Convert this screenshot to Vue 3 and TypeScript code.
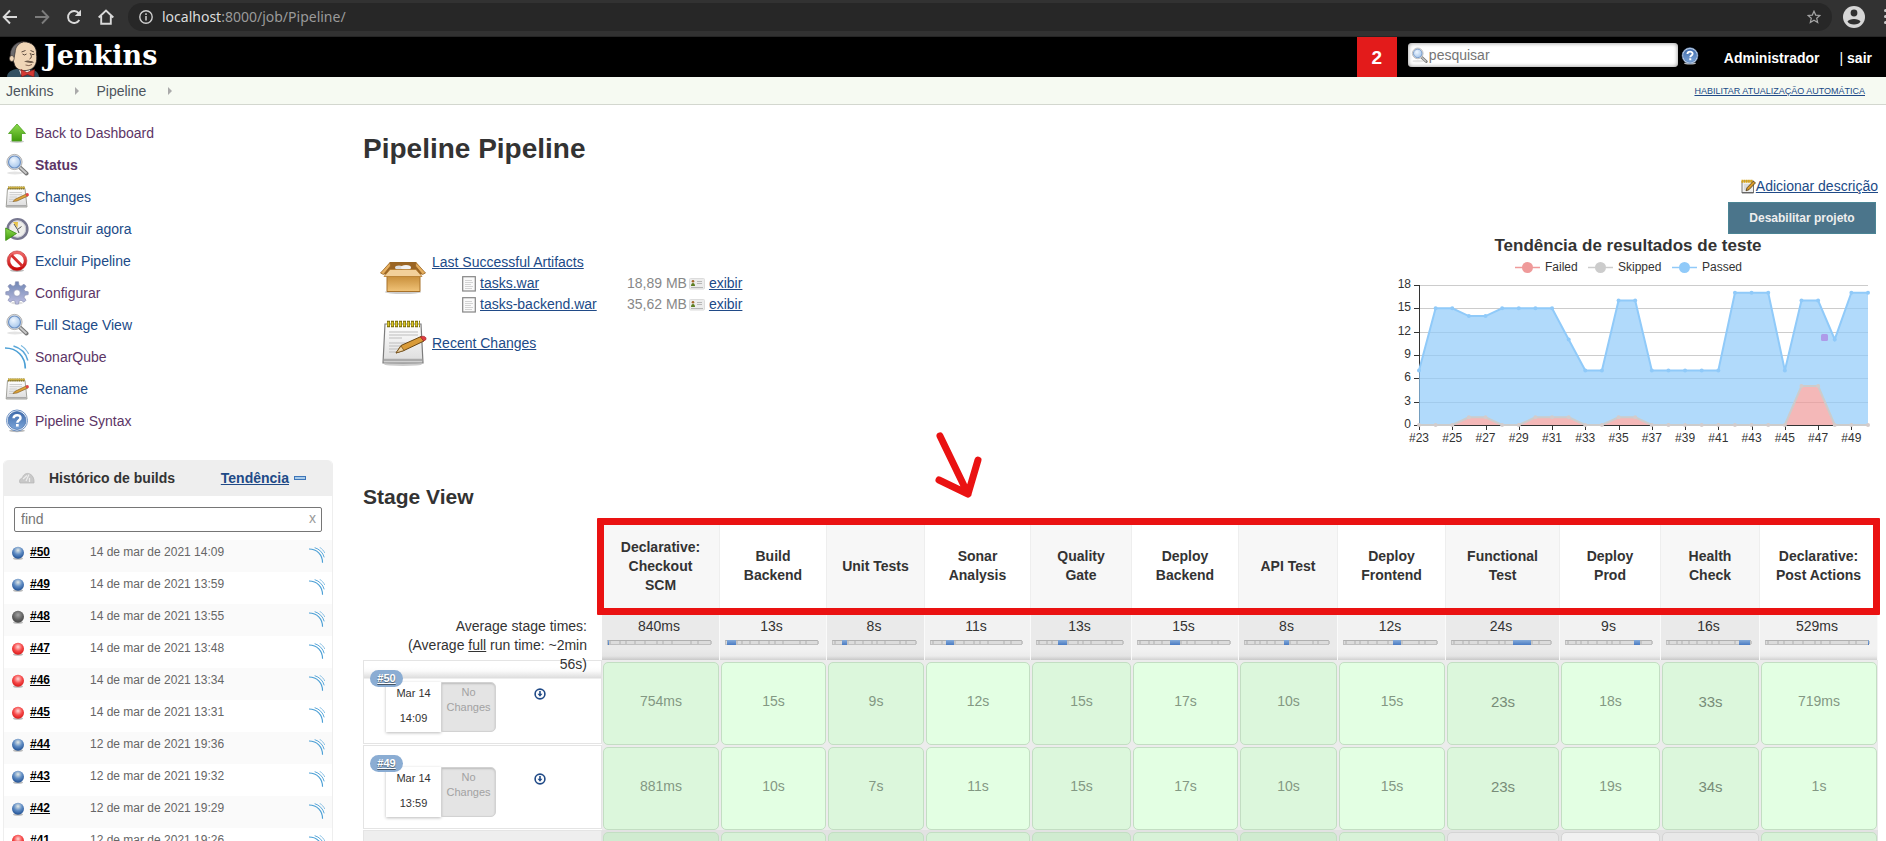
<script setup lang="ts">
import { ref } from 'vue'

interface Task { label: string; icon: string; visited?: boolean; active?: boolean }
interface Build { id: number; ball: 'blue' | 'red' | 'grey'; date: string }
interface Stage { name: string; avg: string; seconds: number; width: number; times: string[]; skipped?: boolean; strong?: boolean }

const tasks: Task[] = [
  { label: 'Back to Dashboard', icon: 'up', visited: true },
  { label: 'Status', icon: 'search', visited: true, active: true },
  { label: 'Changes', icon: 'notepad' },
  { label: 'Construir agora', icon: 'clock' },
  { label: 'Excluir Pipeline', icon: 'forbid' },
  { label: 'Configurar', icon: 'gear', visited: true },
  { label: 'Full Stage View', icon: 'search' },
  { label: 'SonarQube', icon: 'sonar', visited: true },
  { label: 'Rename', icon: 'notepad' },
  { label: 'Pipeline Syntax', icon: 'help', visited: true },
]

const builds: Build[] = [
  { id: 50, ball: 'blue', date: '14 de mar de 2021 14:09' },
  { id: 49, ball: 'blue', date: '14 de mar de 2021 13:59' },
  { id: 48, ball: 'grey', date: '14 de mar de 2021 13:55' },
  { id: 47, ball: 'red', date: '14 de mar de 2021 13:48' },
  { id: 46, ball: 'red', date: '14 de mar de 2021 13:34' },
  { id: 45, ball: 'red', date: '14 de mar de 2021 13:31' },
  { id: 44, ball: 'blue', date: '12 de mar de 2021 19:36' },
  { id: 43, ball: 'blue', date: '12 de mar de 2021 19:32' },
  { id: 42, ball: 'blue', date: '12 de mar de 2021 19:29' },
  { id: 41, ball: 'red', date: '12 de mar de 2021 19:26' },
]

const artifacts = [
  { name: 'tasks.war', size: '18,89 MB' },
  { name: 'tasks-backend.war', size: '35,62 MB' },
]

const stages: Stage[] = [
  { name: 'Declarative: Checkout SCM', avg: '840ms', seconds: 0.84, width: 118, times: ['754ms', '881ms'] },
  { name: 'Build Backend', avg: '13s', seconds: 13, width: 107, times: ['15s', '10s'] },
  { name: 'Unit Tests', avg: '8s', seconds: 8, width: 98, times: ['9s', '7s'] },
  { name: 'Sonar Analysis', avg: '11s', seconds: 11, width: 106, times: ['12s', '11s'] },
  { name: 'Quality Gate', avg: '13s', seconds: 13, width: 101, times: ['15s', '15s'] },
  { name: 'Deploy Backend', avg: '15s', seconds: 15, width: 107, times: ['17s', '17s'] },
  { name: 'API Test', avg: '8s', seconds: 8, width: 99, times: ['10s', '10s'] },
  { name: 'Deploy Frontend', avg: '12s', seconds: 12, width: 108, times: ['15s', '15s'] },
  { name: 'Functional Test', avg: '24s', seconds: 24, width: 114, times: ['23s', '23s'], skipped: true, strong: true },
  { name: 'Deploy Prod', avg: '9s', seconds: 9, width: 101, times: ['18s', '19s'], skipped: true },
  { name: 'Health Check', avg: '16s', seconds: 16, width: 99, times: ['33s', '34s'], skipped: true, strong: true },
  { name: 'Declarative: Post Actions', avg: '529ms', seconds: 0.53, width: 118, times: ['719ms', '1s'] },
]

const runs = [
  { id: 50, day: 'Mar 14', time: '14:09' },
  { id: 49, day: 'Mar 14', time: '13:59' },
]

// Share of the whole run taken by each stage, in percent
const total = stages.reduce((sum, s) => sum + s.seconds, 0)
let elapsed = 0
const segments = stages.map((s) => {
  const start = (elapsed / total) * 100
  elapsed += s.seconds
  return { start, size: (s.seconds / total) * 100 }
})

// Test trend chart
const passed = [7, 15, 15, 14, 14, 15, 15, 15, 15, 11, 7, 7, 16, 16, 7, 7, 7, 7, 7, 17, 17, 17, 7, 16, 16, 11, 17, 17]
const failed = [0, 0, 0, 1, 1, 0, 0, 1, 1, 1, 0, 0, 1, 1, 0, 0, 0, 0, 0, 0, 0, 0, 0, 5, 5, 0, 0, 0]
const left = 41
const right = 490
const base = 191
const px = (i: number) => left + (i * (right - left)) / (passed.length - 1)
const py = (v: number) => base - v * 7.78
const line = (values: number[]) => values.map((v, i) => `${px(i)},${py(v)}`).join(' ')
const passedLine = line(passed)
const failedLine = line(failed)
const passedArea = passedLine + ' ' + failed.map((v, i) => `${px(i)},${py(v)}`).reverse().join(' ')
const failedArea = `${failedLine} ${right},${base} ${left},${base}`
const yTicks = [0, 3, 6, 9, 12, 15, 18]
const xTicks = passed.map((_, i) => i).filter((i) => i % 2 === 0)

const query = ref('')
const find = ref('')
</script>

<template>
  <svg class="sprite" aria-hidden="true">
    <defs>
      <linearGradient id="gGreen" x1="0" y1="0" x2="0" y2="1"><stop offset="0" stop-color="#8fdc50" /><stop offset="1" stop-color="#3f9a0c" /></linearGradient>
      <radialGradient id="gLens" cx=".4" cy=".35" r=".7"><stop offset="0" stop-color="#eef6ff" /><stop offset="1" stop-color="#a3c4ea" /></radialGradient>
      <linearGradient id="gHelp" x1="0" y1="0" x2="0" y2="1"><stop offset="0" stop-color="#3f6bab" /><stop offset="1" stop-color="#7ba4d8" /></linearGradient>
      <linearGradient id="gRed" x1="0" y1="0" x2="0" y2="1"><stop offset="0" stop-color="#ef6b6b" /><stop offset="1" stop-color="#c80808" /></linearGradient>
      <linearGradient id="gGear" x1="0" y1="0" x2="0" y2="1"><stop offset="0" stop-color="#6f86b4" /><stop offset="1" stop-color="#bdbde0" /></linearGradient>
      <linearGradient id="gPaper" x1="0" y1="0" x2="0" y2="1"><stop offset="0" stop-color="#ffffff" /><stop offset="1" stop-color="#dcdcdc" /></linearGradient>
      <linearGradient id="gBox" x1="0" y1="0" x2="0" y2="1"><stop offset="0" stop-color="#c58a35" /><stop offset="1" stop-color="#f0c378" /></linearGradient>
      <radialGradient id="bBlue" cx=".5" cy=".3" r=".7"><stop offset="0" stop-color="#e3e9e6" /><stop offset=".5" stop-color="#5f8cc4" /><stop offset="1" stop-color="#1f4f92" /></radialGradient>
      <radialGradient id="bRed" cx=".5" cy=".35" r=".7"><stop offset="0" stop-color="#ffd9d9" /><stop offset=".5" stop-color="#f64a4a" /><stop offset="1" stop-color="#d41111" /></radialGradient>
      <radialGradient id="bGrey" cx=".5" cy=".35" r=".7"><stop offset="0" stop-color="#a4a4a4" /><stop offset=".6" stop-color="#5e5e5e" /><stop offset="1" stop-color="#444" /></radialGradient>
    </defs>
    <symbol id="i-up" viewBox="0 0 24 24">
      <ellipse cx="12" cy="20.500" rx="7" ry="1.500" fill="#ccc" />
      <path d="M12 3 20.500 12.500H16.500V20H7V12.500H3.500Z" fill="url(#gGreen)" stroke="#4aa01c" stroke-width=".8" stroke-linejoin="round" />
    </symbol>
    <symbol id="i-search" viewBox="0 0 24 24">
      <ellipse cx="10" cy="20" rx="8" ry="1.500" fill="#e4e4e4" />
      <path d="M15 14.500 21.500 20.500" stroke="#777" stroke-width="4" stroke-linecap="round" />
      <path d="M15.500 15 21 20" stroke="#c9c9c9" stroke-width="1.800" stroke-linecap="round" />
      <circle cx="9.500" cy="9" r="7.600" fill="#e6e6e6" stroke="#a0a0a0" stroke-width=".8" />
      <circle cx="9.500" cy="9" r="6" fill="url(#gLens)" stroke="#6e93c6" stroke-width="1.200" />
    </symbol>
    <symbol id="i-notepad" viewBox="0 0 24 24">
      <path d="M2.500 3.500H20L22 22H1.200Z" fill="url(#gPaper)" stroke="#9a9a93" stroke-width=".9" />
      <path d="M1.500 20.700H21.500" stroke="#aaa" stroke-width="1.400" />
      <path d="M3 3H20" stroke="#7c6a14" stroke-width="3" stroke-dasharray="1.500 .6" />
      <path d="M3 2.500H20" stroke="#cdb044" stroke-width="1.500" />
      <path d="M4.500 7.500H17M4.500 9.700H17M4.500 12H12M4 14.300H10M4 16.500H9" stroke="#c4c4c4" stroke-width=".8" />
      <path d="M8 16.500 10 14.300 21.500 8.800 23 11 12 16Z" fill="#dfa43a" stroke="#76541c" stroke-width=".6" />
      <circle cx="22.300" cy="9.700" r="1.600" fill="#e04848" />
    </symbol>
    <symbol id="i-edit" viewBox="0 0 15 15">
      <path d="M1 2H12.500V14H1Z" fill="#f0f0f0" stroke="#777" />
      <path d="M1 13.500H12.500" stroke="#666" />
      <path d="M.5 2.200H12" stroke="#d8a417" stroke-width="3" stroke-dasharray="1.700 .5" />
      <path d="M3 6H10M3 8H8M3 10H6" stroke="#bbb" stroke-width=".8" />
      <path d="M5 11.800 6 8.800 12.300 2.200 14.500 3.800 8 10.700Z" fill="#d99a2c" stroke="#4f3a14" stroke-width=".8" />
    </symbol>
    <symbol id="i-clock" viewBox="0 0 24 24">
      <circle cx="12.500" cy="12" r="9.800" fill="#efefeb" stroke="#77778f" stroke-width="2.600" />
      <circle cx="12.500" cy="12" r="8.200" fill="none" stroke="#c8c8d2" stroke-width="1" />
      <path d="M8 5 13 5 12.500 11Z" fill="#e8c44a" />
      <path d="M9 7 12.500 12.500 16.500 9.500M12.500 12.500 14 16" fill="none" stroke="#555" stroke-width="1" />
      <path d="M.7 11 11.500 16.500.7 23.500Z" fill="url(#gGreen)" stroke="#3a8a10" stroke-width=".8" />
    </symbol>
    <symbol id="i-forbid" viewBox="0 0 24 24">
      <ellipse cx="12" cy="21.500" rx="7" ry="1.500" fill="#bbb" />
      <circle cx="12" cy="11.800" r="8.300" fill="#fff" stroke="url(#gRed)" stroke-width="3" />
      <path d="M6.500 6.300 17.500 17.300" stroke="#d63030" stroke-width="2.800" />
      <circle cx="12" cy="11.800" r="9.900" fill="none" stroke="#b31818" stroke-width=".5" />
    </symbol>
    <symbol id="i-gear" viewBox="0 0 24 24">
      <ellipse cx="12" cy="22" rx="6" ry="1.300" fill="#ddd" />
      <path fill="url(#gGear)" stroke="#8b90b4" stroke-width=".7" fill-rule="evenodd" d="M10.500.8h3l.5 3.500 2 .9 3-2 2 2-2 3 .8 2 3.400.6v2.800l-3.400.6-.8 2 2 3-2 2-3-2-2 .9-.5 3h-3l-.5-3-2-.9-3 2-2-2 2-3-.8-2L.8 13.600v-2.800l3.400-.6.8-2-2-3 2-2 3 2 2-.9ZM12 8.700a3.300 3.300 0 1 0 0 6.600 3.300 3.300 0 0 0 0-6.600Z" />
    </symbol>
    <symbol id="i-sonar" viewBox="0 0 24 24">
      <path d="M0 3C12 3 20.300 11.500 20.300 23.500" fill="none" stroke="#4b9fd5" stroke-width="1.700" />
      <path d="M8.500 1C15.500 3 21 8.500 22.800 15.500" fill="none" stroke="#5ba8da" stroke-width="1.500" />
      <path d="M16 .5C19.500 2.500 22 5.500 23.700 9" fill="none" stroke="#7ab8e0" stroke-width="1.300" />
    </symbol>
    <symbol id="i-help" viewBox="0 0 24 24">
      <ellipse cx="12" cy="21.800" rx="8" ry="1.500" fill="#bbb" />
      <circle cx="12" cy="11.500" r="10.500" fill="#fff" stroke="#5d86bd" stroke-width=".9" />
      <circle cx="12" cy="11.500" r="9" fill="url(#gHelp)" stroke="#3f6bab" stroke-width=".7" />
      <path d="M8.600 9.300C8.700 5.200 15.600 5.200 15.500 9 15.500 11.200 12.400 11.300 12.300 13.700" fill="none" stroke="#fff" stroke-width="2.500" />
      <rect x="11" y="15" width="2.700" height="2.600" fill="#fff" />
    </symbol>
  </svg>

  <div class="page">
    <div class="chrome">
      <button class="nav" aria-label="Back">
        <svg width="16" height="16" viewBox="0 0 16 16"><path d="M15 8H2M8 1.500 1.700 8 8 14.500" fill="none" stroke="#dadada" stroke-width="1.900" /></svg>
      </button>
      <button class="nav" aria-label="Forward">
        <svg width="16" height="16" viewBox="0 0 16 16"><path d="M1 8H14M8 1.500 14.300 8 8 14.500" fill="none" stroke="#7c7c7c" stroke-width="1.900" /></svg>
      </button>
      <button class="nav" aria-label="Reload">
        <svg width="16" height="16" viewBox="0 0 16 16"><path d="M13.300 11A6 6 0 1 1 12.700 4.200" fill="none" stroke="#dadada" stroke-width="1.900" /><path d="M15 .8V7H8.800Z" fill="#dadada" /></svg>
      </button>
      <button class="nav" aria-label="Home">
        <svg width="16" height="16" viewBox="0 0 16 16"><path d="M.7 8.500 8 1.500 15.300 8.500M3.200 7V14.800H12.800V7" fill="none" stroke="#dadada" stroke-width="1.900" /></svg>
      </button>
      <div class="address">
        <svg width="14" height="14" viewBox="0 0 14 14"><circle cx="7" cy="7" r="6.200" fill="none" stroke="#cfcfcf" stroke-width="1.400" /><path d="M7 6V10.500M7 3.300V5" stroke="#cfcfcf" stroke-width="1.500" /></svg>
        <span class="url" role="textbox" aria-label="Address"><b>localhost</b>:8000/job/Pipeline/</span>
        <button class="star" aria-label="Bookmark">
          <svg width="14" height="14" viewBox="0 0 14 14"><path d="M7 1.200 8.700 5.100 12.900 5.500 9.700 8.300 10.700 12.500 7 10.300 3.300 12.500 4.300 8.300 1.100 5.500 5.300 5.100Z" fill="none" stroke="#a5a5a5" stroke-width="1.200" /></svg>
        </button>
      </div>
      <button class="avatar" aria-label="Profile">
        <svg width="22" height="22" viewBox="0 0 22 22"><circle cx="11" cy="11" r="11" fill="#d6d6d6" /><circle cx="11" cy="7" r="3.400" fill="#303030" /><path d="M4.500 15.500C6 12 16 12 17.500 15.500 16 19.500 6 19.500 4.500 15.500Z" fill="#303030" /></svg>
      </button>
      <button class="more" aria-label="Menu"><i></i><i></i><i></i></button>
    </div>

    <header class="top">
      <a class="logo" href="#">
        <svg width="33" height="36" viewBox="0 0 33 36">
          <path d="M0 36C0 31 5 28.500 10 28L23 28C28 29 31.500 31 32 36Z" fill="#335061" />
          <path d="M11 26 23 26 23 32 14 34Z" fill="#fff" />
          <path d="M5 17C3 7 8 1 16 .8 25 .5 30 6 29.500 13 30.500 20 29 27 22 29 14 31 8 28 7 22Z" fill="#f0d6b7" stroke="#231f20" stroke-width=".8" />
          <path d="M3.500 16C2 8 8 .8 16 .8 11 3 8.500 6 8.200 11L7.200 16.500 5.500 18Z" fill="#6d6b6d" stroke="#231f20" stroke-width=".6" />
          <ellipse cx="4.800" cy="17.500" rx="2.400" ry="3" fill="#f0d6b7" stroke="#231f20" stroke-width=".6" />
          <path d="M14.500 11 18.500 9.500M23.500 9.500 27 11M15.500 13Q17.500 15 19.500 13M24.500 13Q26 14.500 27.500 13M23 12Q26 16.500 22.500 18" fill="none" stroke="#4a3a30" stroke-width=".9" />
          <path d="M17 20.500Q21 18.800 23 20 26 19.500 27 21.500 23 22.800 17 20.500Z" fill="#6f5b4b" />
          <path d="M18.500 24Q22 25.500 25 23.500" fill="none" stroke="#6d4a3a" stroke-width=".8" />
          <path d="M14 28.500 20 31.500 27.500 28.500 27 36 20.500 33.500 14.500 36Z" fill="#d33833" stroke="#7a1512" stroke-width=".6" />
        </svg>
        <span>Jenkins</span>
      </a>
      <a class="alerts" href="#">2</a>
      <form class="search" @submit.prevent>
        <label class="searchbox">
          <svg width="17" height="17"><use href="#i-search" /></svg>
          <input v-model="query" type="text" placeholder="pesquisar" aria-label="pesquisar" />
        </label>
        <a href="#" class="helplink" aria-label="Ajuda"><svg width="18" height="18"><use href="#i-help" /></svg></a>
      </form>
      <a class="user" href="#">Administrador</a>
      <span class="logout">| <a href="#">sair</a></span>
    </header>

    <nav class="crumbs">
      <a href="#">Jenkins</a><i class="sep"></i>
      <a href="#">Pipeline</a><i class="sep"></i>
      <a class="refresh" href="#">HABILITAR ATUALIZAÇÃO AUTOMÁTICA</a>
    </nav>

    <div class="body">
      <aside class="side">
        <nav class="tasks">
          <a v-for="t in tasks" :key="t.label" href="#" :class="{ visited: t.visited, active: t.active }">
            <svg width="24" height="24"><use :href="'#i-' + t.icon" /></svg>{{ t.label }}
          </a>
        </nav>

        <section class="history">
          <div class="history-head">
            <svg width="16" height="12" viewBox="0 0 16 12"><path d="M1 11C-.5 8 2 6 3.500 6 4 2 8 .5 11 2 14 3.500 15.500 7 15 11Z" fill="#c8c8c8" stroke="#b4b4b4" stroke-width=".7" /><path d="M4 7 8 3.500M7 9 10 2.500M10.500 6V10" stroke="#ececec" stroke-width="1.200" /></svg>
            <strong>Histórico de builds</strong>
            <a href="#">Tendência</a>
            <button aria-label="Recolher"></button>
          </div>
          <div class="find">
            <input v-model="find" type="text" placeholder="find" aria-label="find" />
            <button aria-label="Limpar" @click="find = ''">x</button>
          </div>
          <div v-for="b in builds" :key="b.id" class="build">
            <svg class="ball" width="14" height="14" viewBox="0 0 14 14">
              <ellipse cx="7" cy="12.500" rx="5" ry="1.300" fill="#bbb" />
              <circle cx="7" cy="6.700" r="6" :fill="b.ball === 'blue' ? 'url(#bBlue)' : b.ball === 'red' ? 'url(#bRed)' : 'url(#bGrey)'" />
            </svg>
            <a class="num" href="#">#{{ b.id }}</a>
            <span class="date">{{ b.date }}</span>
            <svg class="mini" width="16" height="16"><use href="#i-sonar" /></svg>
          </div>
        </section>
      </aside>

      <main class="main">
        <h1>Pipeline Pipeline</h1>
        <div class="summary">
          <div class="artifacts">
            <div class="block first">
              <svg class="big" width="48" height="34" viewBox="0 0 48 34">
                <ellipse cx="24" cy="31" rx="18" ry="2" fill="#ccc" />
                <path d="M11 1.500H37L43 13H5Z" fill="#9a6524" stroke="#9a6623" />
                <ellipse cx="20" cy="6.500" rx="4" ry="2" fill="#dedede" /><ellipse cx="27" cy="6.500" rx="5" ry="2.500" fill="#f2f2f2" />
                <path d="M8 14H41V30.500H8Z" fill="url(#gBox)" stroke="#a8722a" />
                <path d="M11 8.500H37L43 15.500H5Z" fill="#f2d09a" stroke="#b47a2c" stroke-width=".8" />
                <path d="M11 1.500 1.500 12 4.500 13.500 11.500 5ZM37 1.500 46.500 12 43.500 13.500 36.500 5Z" fill="#e5ae5e" stroke="#9a6623" stroke-width=".8" />
              </svg>
              <div>
                <a href="#">Last Successful Artifacts</a>
                <table>
                  <tbody>
                    <tr v-for="a in artifacts" :key="a.name">
                      <td class="file">
                        <svg width="14" height="16" viewBox="0 0 14 16"><rect x=".7" y=".7" width="12.600" height="14.300" fill="#fafafa" stroke="#858585" stroke-width="1.200" /><path d="M3 4.500H10M3 6.500H11M3 8.500H9M3 10.500H11M3 12.500H10" stroke="#c2c2c2" stroke-width=".7" /></svg>
                        <a href="#">{{ a.name }}</a>
                      </td>
                      <td class="size">{{ a.size }}</td>
                      <td class="view">
                        <svg width="16" height="12" viewBox="0 0 16 12"><rect x=".5" y=".5" width="15" height="10.500" rx="1" fill="#ececec" stroke="#dcdcdc" /><circle cx="4" cy="3.300" r="1.300" fill="#a5672c" /><path d="M2 8C2 4 6 4 6 8Z" fill="#5c7e22" /><path d="M8 3.500H13M8 5.500H13M2 9.500H14" stroke="#aaa" stroke-width=".8" /></svg>
                        <a href="#">exibir</a>
                      </td>
                    </tr>
                  </tbody>
                </table>
              </div>
            </div>
            <div class="block">
              <svg class="big" width="48" height="48" viewBox="0 0 48 48">
                <ellipse cx="24" cy="45.500" rx="19" ry="1.500" fill="#ccc" />
                <path d="M6 5H42L44 44H4Z" fill="url(#gPaper)" stroke="#7d7d7d" stroke-width="1.200" />
                <path d="M5 41H43" stroke="#aaa" stroke-width="2.500" />
                <path d="M8 5H41" stroke="#75670a" stroke-width="6.500" stroke-dasharray="3 1" />
                <path d="M8.500 5H41" stroke="#d9c62a" stroke-width="4.500" stroke-dasharray="1.800 2.200" />
                <path d="M10 13H39M10 16H39M10 19H23M10 24H39M10 27H30M10 30H25M10 33H18" stroke="#bdbdbd" />
                <path d="M17 34 22 26.500 42 17.500 45 22 25 31.500Z" fill="#d99b38" stroke="#6c4712" />
                <path d="M22 27 25 31.500 17 34Z" fill="#efd3a0" stroke="#6c4712" stroke-width=".7" />
                <path d="M41.500 18C44 16.500 47.500 17.500 47 20.500L44.700 22Z" fill="#e23c42" stroke="#9e2227" stroke-width=".7" />
              </svg>
              <a href="#">Recent Changes</a>
            </div>
          </div>

          <div class="panel">
            <a class="describe" href="#"><svg width="15" height="15"><use href="#i-edit" /></svg>Adicionar descrição</a>
            <button class="disable">Desabilitar projeto</button>
            <svg class="chart" width="500" height="216" viewBox="0 0 500 216" role="img" aria-label="Tendência de resultados de teste">
              <text x="250" y="17" class="c-title">Tendência de resultados de teste</text>
              <g stroke-width="1.500">
                <path d="M137 33.500H162" stroke="#ef9a9a" /><circle cx="149.500" cy="33.500" r="5.500" fill="#ef9a9a" />
                <path d="M210 33.500H235" stroke="#ccc" /><circle cx="222.500" cy="33.500" r="5.500" fill="#ccc" />
                <path d="M294 33.500H319" stroke="#90caf9" /><circle cx="306.500" cy="33.500" r="5.500" fill="#90caf9" />
              </g>
              <text x="167" y="37">Failed</text><text x="240" y="37">Skipped</text><text x="324" y="37">Passed</text>
              <path v-for="v in yTicks.slice(1)" :key="v" :d="`M${left} ${Math.round(py(v)) + 0.5}H${right}`" stroke="#ccc" />
              <path v-for="v in yTicks" :key="'t' + v" :d="`M${left - 5} ${Math.round(py(v)) + 0.5}H${left}`" stroke="#333" />
              <path :d="`M${left + 0.5} 51V${base}M${left} ${base + 0.5}H${right}`" stroke="#333" />
              <path v-for="i in xTicks" :key="'x' + i" :d="`M${Math.round(px(i)) + 0.5} ${base}v5`" stroke="#333" />
              <text v-for="v in yTicks" :key="'l' + v" :x="33" :y="py(v) + 3" text-anchor="end">{{ v }}</text>
              <text v-for="i in xTicks" :key="'n' + i" :x="px(i)" y="208" text-anchor="middle">#{{ 23 + i }}</text>
              <polygon :points="failedArea" fill="#ef9a9a" fill-opacity=".7" />
              <polygon :points="passedArea" fill="#90caf9" fill-opacity=".7" />
              <polyline :points="failedLine" fill="none" stroke="#ccc" stroke-width="2" />
              <circle v-for="(v, i) in failed" :key="'f' + i" :cx="px(i)" :cy="py(v)" r="2" fill="#d3cccc" />
              <polyline :points="passedLine" fill="none" stroke="#90caf9" stroke-width="2" />
              <circle v-for="(v, i) in passed" :key="'p' + i" :cx="px(i)" :cy="py(v)" r="2" fill="#90caf9" />
              <rect x="443" y="100" width="7" height="7" rx="1.500" fill="#ae9ae8" />
            </svg>
          </div>
        </div>

        <h2>Stage View</h2>
        <div class="stage-view">
          <table>
            <colgroup>
              <col class="run-col" />
              <col v-for="s in stages" :key="s.name" :style="{ width: s.width + 'px' }" />
            </colgroup>
            <thead>
              <tr>
                <td></td>
                <th v-for="s in stages" :key="s.name" scope="col"><span>{{ s.name }}</span></th>
              </tr>
            </thead>
            <tbody>
              <tr class="averages">
                <td><div class="avg-label">Average stage times:<br />(Average <u>full</u> run time: ~2min 56s)</div></td>
                <td v-for="(s, i) in stages" :key="s.name" class="avg">
                  <div class="avg-box">
                    {{ s.avg }}
                    <div class="track">
                      <i v-for="(g, k) in segments.slice(1)" :key="k" class="tick" :style="{ left: g.start + '%' }"></i>
                      <i class="share" :style="{ left: segments[i].start + '%', width: segments[i].size + '%' }"></i>
                    </div>
                  </div>
                </td>
              </tr>
              <tr v-for="(r, n) in runs" :key="r.id">
                <td class="run">
                  <div class="run-box" :class="{ shaded: n === 0 }">
                    <a class="badge" href="#">#{{ r.id }}</a>
                    <div class="when"><span>{{ r.day }}</span><span>{{ r.time }}</span></div>
                    <div class="changes">No<br />Changes</div>
                    <a class="download" href="#" aria-label="Artifacts">
                      <svg width="12" height="12" viewBox="0 0 12 12"><circle cx="6" cy="6" r="4.900" fill="none" stroke="#204a87" stroke-width="1.600" /><path d="M5.200 3H6.800V5.800H8.500L6 8.800 3.500 5.800H5.200Z" fill="#204a87" /></svg>
                    </a>
                  </div>
                </td>
                <td v-for="s in stages" :key="s.name" class="cell" :class="{ strong: s.strong }"><div>{{ s.times[n] }}</div></td>
              </tr>
              <tr class="dim">
                <td class="run"><div class="run-box"></div></td>
                <td v-for="s in stages" :key="s.name" class="cell" :class="{ skipped: s.skipped }"><div></div></td>
              </tr>
            </tbody>
          </table>
          <div class="frame"></div>
          <svg class="arrow" width="52" height="72" viewBox="0 0 52 72"><path d="M8 8 36 66M7 52 36 66 46 32" fill="none" stroke="#ea1212" stroke-width="7" stroke-linecap="round" stroke-linejoin="round" /></svg>
        </div>
      </main>
    </div>
  </div>
</template>

<style>
body { background: #fff; }
</style>

<style scoped>
* { box-sizing: border-box; }
.sprite { position: absolute; width: 0; height: 0; }
.page { height: 100vh; overflow: hidden; font: 14px/20px "Liberation Sans", Arial, sans-serif; color: #333; }
a { color: #204a87; }
button { border: 0; padding: 0; background: none; font: inherit; color: inherit; }
svg { display: block; flex: none; }

.chrome { display: flex; align-items: center; height: 37px; padding: 0 0 3px 2px; background: #323232; border-bottom: 1px solid #262626; overflow: hidden; }
.nav { width: 16px; margin-right: 16px; }
.address { display: flex; align-items: center; flex: 1; height: 28px; margin-left: -2px; padding: 0 11px; border-radius: 14px; background: #272727; }
.url { flex: 1; margin-left: 9px; font: 14px/20px "Noto Sans", sans-serif; color: #9a9a9a; }
.url b { font-weight: 400; color: #dcdcdc; }
.star { width: 14px; }
.avatar { margin: 0 19px 0 11px; }
.more { width: 2px; display: grid; gap: 3px; }
.more i { width: 3px; height: 3px; border-radius: 50%; background: #ccc; }

.top { display: flex; height: 40px; background: #000; color: #fff; font-weight: 700; }
.top a { color: #fff; text-decoration: none; }
.logo { display: flex; align-items: flex-start; padding: 4px 0 0 7px; margin-right: auto; }
.logo span { margin-left: 4px; font: bold 27px/30px "DejaVu Serif", serif; }
.alerts { width: 40px; background: #e31b1b; text-align: center; font-size: 19px; line-height: 41px; }
.search { display: flex; align-items: flex-start; margin: 6px 0 0 11px; }
.searchbox { display: flex; align-items: center; width: 270px; height: 24px; padding-left: 3px; background: #fff; border-radius: 4px; box-shadow: inset 0 0 4px #888; }
.searchbox input { flex: 1; min-width: 0; border: 0; outline: 0; background: none; padding: 0 0 0 1px; font: 14px/20px "Liberation Sans", Arial, sans-serif; }
input::placeholder { color: #757575; opacity: 1; }
.helplink { margin: 4px 0 0 3px; }
.user { margin: 11px 0 0 25px; }
.logout { margin: 11px 14px 0 20px; font-weight: 400; }
.logout a { font-weight: 700; }

.crumbs { display: flex; align-items: center; height: 28px; padding: 0 21px 0 6px; background: #f6faf2; border-bottom: 1px solid #d3d7cf; }
.crumbs a { color: #4d545d; text-decoration: none; }
.sep { border-left: 4px solid #aaa; border-top: 4px solid transparent; border-bottom: 4px solid transparent; margin: 0 17px 0 22px; }
.crumbs .refresh { margin-left: auto; font-size: 9px; color: #204a87; text-decoration: underline; }

.body { display: flex; }
.side { width: 333px; flex: none; padding: 12px 0 0 3px; }
.tasks a { display: flex; align-items: center; gap: 6px; height: 32px; padding-left: 2px; text-decoration: none; }
.tasks .visited { color: #5c3566; }
.tasks .active { font-weight: 700; }

.history { margin-top: 23px; border: 1px solid #eee; border-top: 0; border-radius: 5px 5px 0 0; }
.history-head { display: flex; align-items: center; height: 36px; padding: 0 26px 0 15px; background: #eee; border-radius: 5px 5px 0 0; font-weight: 700; }
.history-head strong { margin-left: 14px; }
.history-head a { margin-left: auto; }
.history-head button { width: 12px; height: 4px; margin-left: 5px; border: 1px solid #3d75b8; background: #a9cbe9; }
.find { display: flex; position: relative; padding: 11px 10px 8px; }
.find input { flex: 1; height: 25px; padding: 0 6px 1px; border: 1px solid #767676; border-radius: 2px; font: 14px/20px "Liberation Sans", Arial, sans-serif; }
.find button { position: absolute; right: 16px; top: 12px; color: #999; }
.build { display: flex; height: 32px; padding: 4px 7px 0 7px; font-size: 12px; line-height: 16px; }
.build:nth-child(odd) { background: #fafafa; }
.ball { margin-top: 2px; }
.num { width: 60px; margin-left: 5px; color: #000; font-weight: 700; }
.date { color: #666; }
.mini { margin: 3px 0 0 auto; }

.main { flex: 1; min-width: 0; margin-left: 30px; padding: 28px 8px 0 0; }
h1 { margin: 0; font-size: 28px; line-height: 32px; }
h2 { margin: 34px 0 8px; font-size: 21px; line-height: 26px; }
.summary { display: flex; justify-content: space-between; margin-top: 11px; }
.artifacts { padding: 76px 0 0 16px; line-height: 21px; }
.block { display: flex; align-items: center; gap: 5px; }
.block.first { align-items: flex-start; margin-bottom: 4px; }
.first .big { margin-top: 9px; }
.block > div > a { display: inline-block; }
.artifacts table { border-spacing: 0; margin-left: 30px; }
.artifacts td { padding: 0; height: 21px; }
.file, .view { white-space: nowrap; }
.file { width: 165px; }
.file svg, .view svg { display: inline-block; vertical-align: middle; }
.file a { margin-left: 4px; }
.view a { margin-left: 4px; }
.artifacts .size { color: #888; padding-right: 2px; }
.panel { display: flex; flex-direction: column; align-items: flex-end; }
.describe { display: flex; align-items: center; }
.disable { width: 148px; height: 32px; margin: 6px 2px 0 0; border: 1px solid #4b8494; background: #4b758b; color: #eee; font-size: 12px; font-weight: 700; }
.chart text { font-size: 12px; fill: #333; }
.chart .c-title { font-size: 17px; font-weight: 700; text-anchor: middle; }

.stage-view { position: relative; }
.stage-view table { width: 100%; table-layout: fixed; border-spacing: 0; }
.stage-view td, .stage-view th { padding: 0; }
.run-col { width: 239px; }
.stage-view th { height: 96px; padding: 0 10px; line-height: 19px; background: #fff; border-right: 1px solid #eee; }
.stage-view th:nth-child(even) { background: #f7f7f7; }
.avg-label { position: relative; z-index: 1; height: 46px; padding: 3px 15px 0 40px; line-height: 19px; text-align: right; }
.avg { border-right: 1px solid #fafafa; vertical-align: top; background: linear-gradient(#f2f2f2 35px, #ececec 42px, #d2d2d2); text-align: center; }
.avg:nth-child(even) { background: linear-gradient(#eaeaea 35px, #e4e4e4 42px, #c8c8c8); }
.avg-box { height: 46px; padding: 3px 8px 0 5px; line-height: 19px; }
.track { position: relative; height: 5px; margin-top: 4px; background: #dcdcdc; border: 1px solid #c0c0c0; border-top-color: #b0b0b0; }
.tick { position: absolute; top: 0; width: 2px; height: 3px; background: #c6c6c6; }
.share { position: absolute; top: -1px; height: 5px; min-width: 1px; background: linear-gradient(#86abd9, #4a7cc4); }
.run { height: 85px; vertical-align: top; }
.run-box { display: flex; position: relative; height: 84px; padding: 21px 0 0 22px; border: 1px solid #e4e4e4; font-size: 11px; line-height: 15px; }
.run-box.shaded { background: linear-gradient(#fff 6px, #fafafa 10px, #ddd 17px, #fff 18px); }
.badge { position: absolute; left: 6px; top: 9px; width: 33px; height: 17px; border-radius: 9px; background: #8badd3; color: #fff; font-weight: 700; line-height: 17px; text-align: center; text-shadow: 0 1px 1px #456; }
.when { display: flex; flex-direction: column; gap: 10px; width: 55px; height: 50px; padding-top: 4px; background: #fff; text-align: center; box-shadow: 0 1px 3px #bbb; }
.changes { width: 55px; height: 50px; padding-top: 2px; background: #e4e4e4; border: 1px solid #d2d2d2; border-radius: 0 5px 5px 0; color: #a2a2a2; text-align: center; line-height: 15px; box-shadow: inset 0 1px 2px #bbb; }
.download { margin: 6px 0 0 38px; }
.cell { height: 85px; background: #ececec; text-align: center; color: #839883; }
.stage-view .cell { padding: 2px 1px 0; }
.cell div { display: grid; place-items: center; height: 83px; padding-bottom: 5px; border: 1px solid #c3dec3; border-radius: 5px; background: #e3ffe3; }
.cell:nth-child(even) div { background: #dcf7dc; }
.strong { font-size: 15px; color: #788c78; }
.cell.strong div { padding-bottom: 3px; }
.dim .run-box { background: #eee; }
.dim .cell { background: #e2e2e2; }
.dim .cell div { background: #d8f2d8; }
.dim .cell:nth-child(even) div { background: #d0ebd0; }
.dim .cell.skipped div { background: #f1f1f1; border-color: #d4d4d4; }
.dim .cell.skipped:nth-child(even) div { background: #e8e8e8; }
.frame { position: absolute; left: 234px; right: -2px; top: 0; height: 97px; border: 7px solid #ea1212; border-radius: 1px; pointer-events: none; }
.arrow { position: absolute; left: 569px; top: -90px; }
</style>
